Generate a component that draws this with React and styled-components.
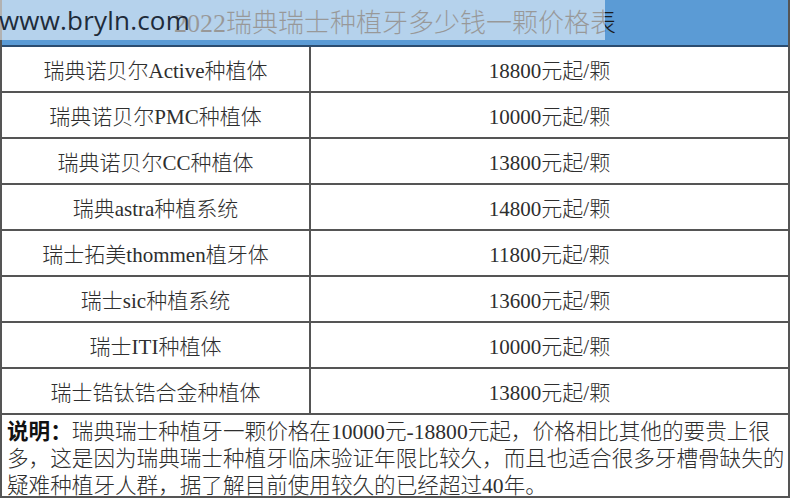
import styled, { createGlobalStyle } from "styled-components";

const GlobalStyle = createGlobalStyle`
  html, body {
    margin: 0;
    padding: 0;
    background: #ffffff;
  }
  body {
    font-family: "Liberation Serif", "Noto Sans CJK SC", serif;
    color: #2a2a2a;
  }
`;

// datos de la tabla
const precios = [
  { nombre: "瑞典诺贝尔Active种植体", precio: "18800元起/颗" },
  { nombre: "瑞典诺贝尔PMC种植体", precio: "10000元起/颗" },
  { nombre: "瑞典诺贝尔CC种植体", precio: "13800元起/颗" },
  { nombre: "瑞典astra种植系统", precio: "14800元起/颗" },
  { nombre: "瑞士拓美thommen植牙体", precio: "11800元起/颗" },
  { nombre: "瑞士sic种植系统", precio: "13600元起/颗" },
  { nombre: "瑞士ITI种植体", precio: "10000元起/颗" },
  { nombre: "瑞士锆钛锆合金种植体", precio: "13800元起/颗" },
];

export default function App() {
  return (
    <>
      <GlobalStyle />
      <Page>
        <Tabla>
          <Header>2022瑞典瑞士种植牙多少钱一颗价格表</Header>
          {precios.map((p) => (
            <Fila key={p.nombre}>
              <Celda $first>{p.nombre}</Celda>
              <Celda>{p.precio}</Celda>
            </Fila>
          ))}
          <Nota>
            <Linea>
              <b>说明：</b>瑞典瑞士种植牙一颗价格在10000元-18800元起，价格相比其他的要贵上很
            </Linea>
            <Linea>多，这是因为瑞典瑞士种植牙临床验证年限比较久，而且也适合很多牙槽骨缺失的</Linea>
            <Linea>疑难种植牙人群，据了解目前使用较久的已经超过40年。</Linea>
          </Nota>
        </Tabla>
        <Velo />
        <Marca>www.bryln.com</Marca>
      </Page>
    </>
  );
}

const Page = styled.div`
  position: relative;
  width: 791px;
  height: 500px;
  overflow: hidden;
`;

const Tabla = styled.div`
  width: 790px;
  border-left: 2px solid #555;
  border-right: 2px solid #555;
  border-bottom: 2px solid #555;
  box-sizing: border-box;
`;

const Header = styled.div`
  height: 47px;
  box-sizing: border-box;
  background: #5b9bd5;
  border-bottom: 2px solid #2c4d70;
  display: flex;
  align-items: center;
  justify-content: center;
  padding-bottom: 4px;
  font-size: 26px;
  font-weight: 300;
  color: #1c1c1c;
  white-space: nowrap;
`;

const Fila = styled.div`
  display: grid;
  grid-template-columns: 309px 1fr;
  height: 46px;
  box-sizing: border-box;
  border-bottom: 2px solid #555;
`;

const Celda = styled.div`
  display: flex;
  align-items: center;
  justify-content: center;
  font-size: 21px;
  font-weight: 300;
  color: #2e2e2e;
  white-space: nowrap;
  border-right: ${({ $first }) => ($first ? "2px solid #555" : "none")};
`;

const Nota = styled.div`
  padding: 4px 0 0 5px;
  height: 81px;
  box-sizing: border-box;
  font-size: 21.6px;
  font-weight: 300;
  line-height: 27px;
  color: #2e2e2e;

  b {
    color: #111;
    font-weight: 700;
  }
`;

const Linea = styled.div`
  white-space: nowrap;
`;

const Velo = styled.div`
  position: absolute;
  left: 0;
  top: 0;
  width: 605px;
  height: 40px;
  background: rgba(255, 255, 255, 0.55);
`;

const Marca = styled.div`
  position: absolute;
  left: -1px;
  top: 2px;
  font-family: "Open Sans", "Liberation Sans", sans-serif;
  font-size: 26px;
  color: #1e2b3a;
  letter-spacing: 0.2px;
`;
